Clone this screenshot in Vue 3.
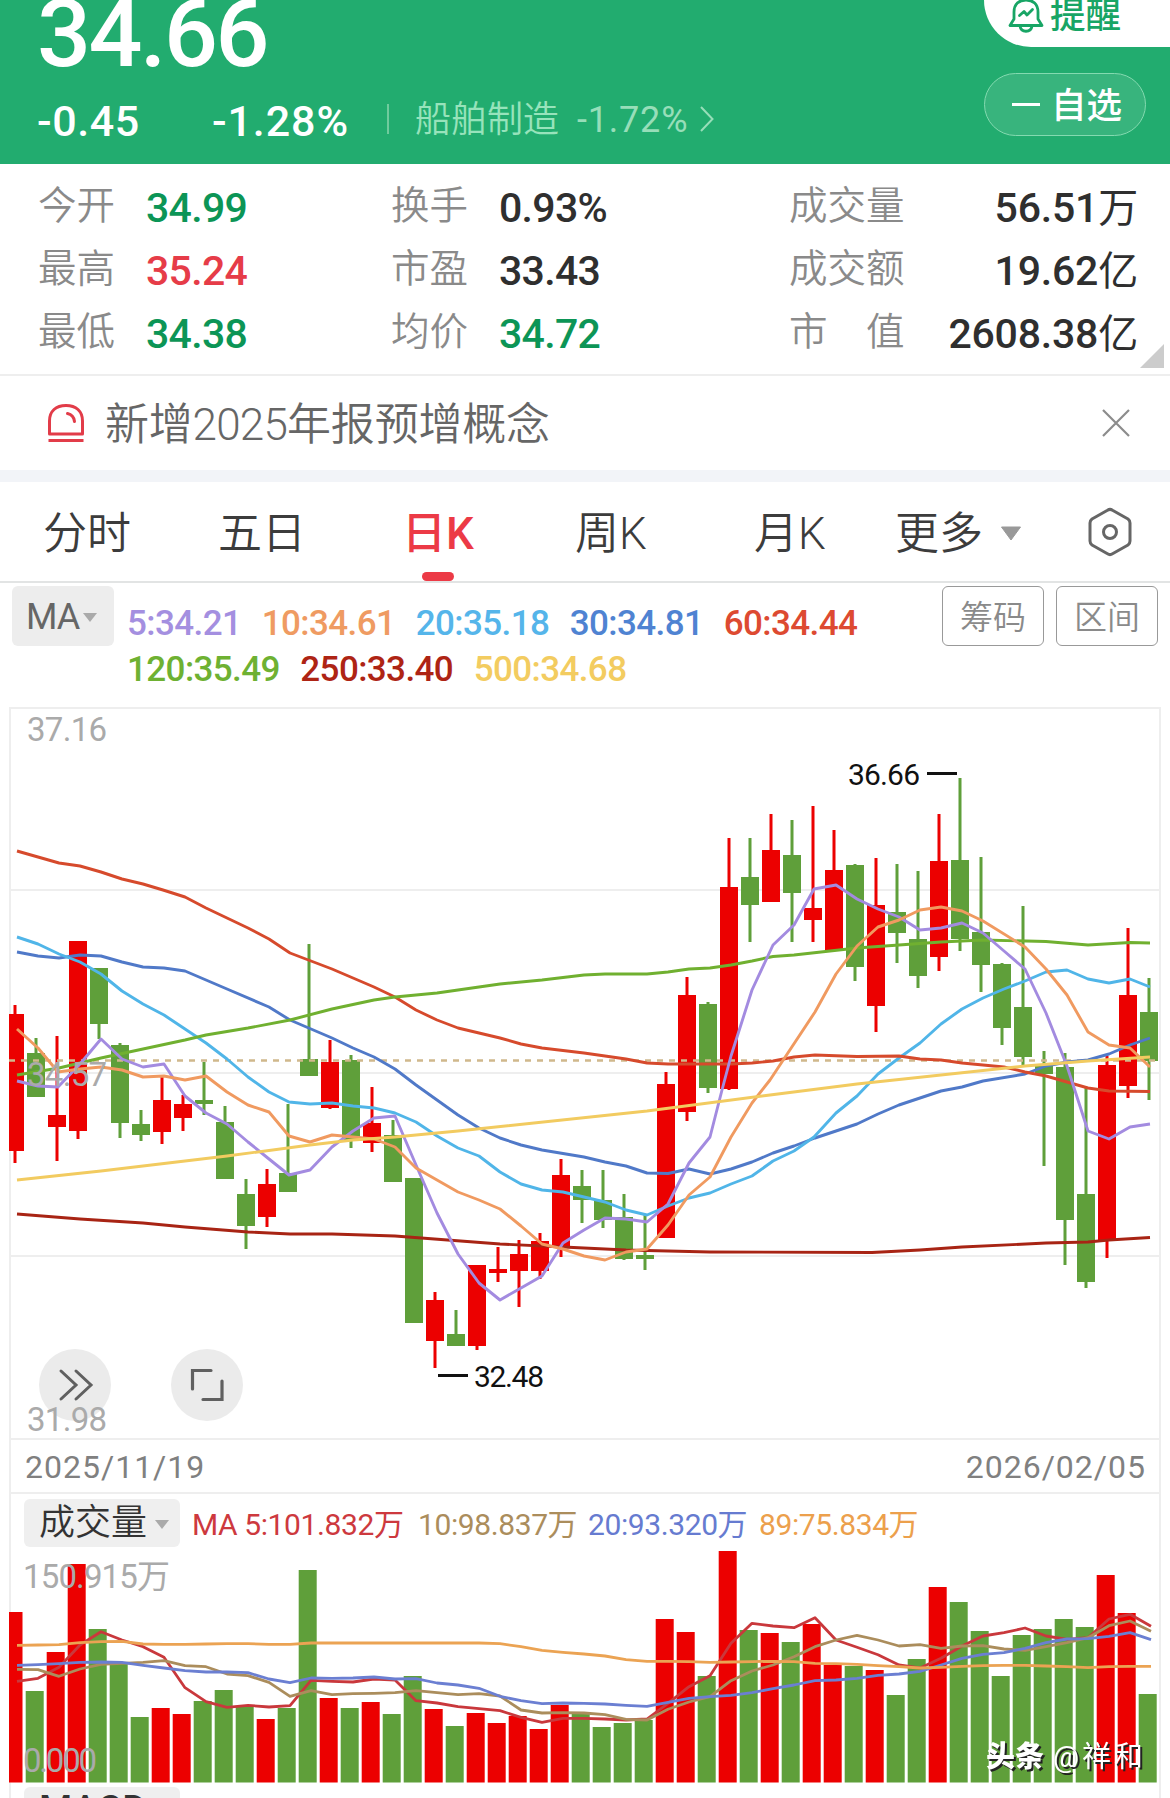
<script setup>
const stats = [
  ['今开', '34.99', 'down', '换手', '0.93%', '', '成交量', '56.51', '万'],
  ['最高', '35.24', 'up', '市盈', '33.43', '', '成交额', '19.62', '亿'],
  ['最低', '34.38', 'down', '均价', '34.72', 'down', '市　值', '2608.38', '亿'],
]
const tabs = [
  { name: '分时', cls: 't1' }, { name: '五日', cls: 't2' }, { name: '日K', cls: 't3 active' },
  { name: '周K', cls: 't4' }, { name: '月K', cls: 't5' }, { name: '更多', cls: 't6' },
]
const RED = '#ec0000'
const GREEN = '#5f9f3a'

// [rising, high, body top, body bottom, low, volume top]
const days = [
  [1, 1005, 1014, 1151, 1163, 1612], [0, 1038, 1053, 1097, 1097, 1691], [1, 1036, 1115, 1127, 1161, 1652],
  [1, 941, 941, 1131, 1139, 1564], [0, 968, 968, 1024, 1039, 1629], [0, 1043, 1045, 1123, 1138, 1663],
  [0, 1110, 1124, 1135, 1141, 1717], [1, 1077, 1100, 1132, 1144, 1708], [1, 1095, 1104, 1118, 1131, 1714],
  [0, 1062, 1100, 1104, 1115, 1701], [0, 1106, 1122, 1179, 1179, 1690], [0, 1179, 1194, 1226, 1249, 1707],
  [1, 1169, 1184, 1217, 1227, 1719], [0, 1104, 1173, 1192, 1192, 1708], [0, 944, 1059, 1076, 1076, 1570],
  [1, 1040, 1062, 1108, 1109, 1698], [0, 1055, 1060, 1141, 1148, 1708], [1, 1087, 1123, 1143, 1152, 1702],
  [0, 1120, 1135, 1182, 1182, 1714], [0, 1178, 1178, 1323, 1323, 1676], [1, 1292, 1300, 1341, 1368, 1709],
  [0, 1310, 1334, 1346, 1346, 1726], [1, 1265, 1265, 1346, 1350, 1713], [1, 1247, 1269, 1273, 1282, 1723],
  [1, 1240, 1254, 1271, 1307, 1716], [1, 1233, 1241, 1271, 1279, 1729], [1, 1159, 1175, 1248, 1257, 1705],
  [0, 1170, 1186, 1200, 1223, 1712], [0, 1170, 1200, 1220, 1228, 1727], [0, 1194, 1217, 1259, 1260, 1723],
  [0, 1215, 1255, 1259, 1270, 1720], [1, 1072, 1084, 1238, 1238, 1619], [1, 977, 995, 1112, 1121, 1632],
  [0, 1002, 1004, 1088, 1093, 1676], [1, 838, 887, 1089, 1090, 1551], [0, 838, 877, 905, 942, 1630],
  [1, 814, 850, 902, 902, 1633], [0, 820, 855, 893, 942, 1642], [1, 806, 908, 920, 942, 1624],
  [1, 830, 870, 950, 950, 1665], [0, 864, 865, 967, 981, 1666], [1, 858, 905, 1006, 1032, 1670],
  [0, 864, 912, 933, 963, 1695], [0, 871, 939, 976, 988, 1659], [1, 814, 861, 957, 971, 1587],
  [0, 778, 860, 939, 951, 1602], [0, 857, 932, 965, 992, 1631], [0, 963, 964, 1028, 1045, 1676],
  [0, 906, 1007, 1057, 1065, 1635], [0, 1051, 1066, 1074, 1166, 1629], [0, 1053, 1067, 1220, 1265, 1619],
  [0, 1088, 1194, 1282, 1288, 1627], [1, 1056, 1065, 1240, 1258, 1575], [1, 928, 995, 1086, 1098, 1613],
  [0, 978, 1012, 1061, 1100, 1694],
].map(([up, high, top, bottom, low, vol], i) => ({
  color: up ? RED : GREEN, high, top, bottom, low, vol,
  cx: 15 + 21 * i,
  x: i ? 6 + 21 * i : 9,
  w: i ? 18 : 15,
  vx: i ? 4.7 + 21 * i : 9,
  vw: i ? 18 : 13.5,
}))

const averages = [
  { color: '#a82414', pts: '17,1214 80,1219 143,1223 185,1227 248,1232 290,1234 332,1234 395,1236 500,1244 563,1247 626,1250 710,1252 872,1252.5 920,1250 962,1247 1046,1243 1088,1242 1109,1240 1150,1237.5' },
  { color: '#5079c8', pts: '17,952 38,956 59,958 80,955 101,956 122,962 143,967 164,968 185,971 206,980 227,989 269,1007 290,1020 311,1029 332,1038 353,1048 374,1057 395,1069 416,1085 437,1100 458,1115 479,1128 500,1138 521,1145 542,1150 584,1157 605,1162 626,1166 647,1173 668,1173.5 689,1169 710,1174 731,1169 752,1162 773,1153 794,1146 815,1138 836,1131 857,1124 878,1114 899,1105 941,1091 962,1087 983,1081 1025,1074 1046,1066 1067,1062 1088,1060 1109,1054 1130,1045 1150,1038' },
  { color: '#50b5e8', pts: '17,937 38,944 59,954 80,962 101,974 122,991 143,1004 164,1015 185,1029 206,1043 227,1059 248,1077 269,1092 289,1102 310,1104 332,1103 353,1106 374,1108 395,1113 416,1122 437,1136 458,1148 479,1156 500,1172 521,1184 542,1190 563,1192 584,1197 605,1202 626,1210 647,1215 668,1206 689,1198 710,1193 731,1184 752,1176 773,1161 794,1151 814,1137 836,1113 857,1096 878,1074 899,1058 920,1043 941,1024 962,1009 983,998 1004,989 1025,981 1046,972 1067,970 1088,979 1109,983 1130,979 1150,987' },
  { color: '#d64a2c', pts: '17,851 38,857 59,863 80,866 101,872 122,879 143,884 163,890 185,897 206,908 227,918 248,928 269,939 290,953 311,961 332,969 353,978 374,987 395,997 416,1010 437,1020 458,1028 479,1033 500,1038 521,1044 542,1048 584,1053 605,1056 626,1059 647,1063 668,1064 731,1064 752,1063 773,1061 794,1057 815,1055 857,1056.5 899,1056 920,1059 941,1060 962,1063 983,1065 1004,1067 1025,1072 1046,1076 1067,1082 1088,1088 1109,1091 1150,1091.5' },
  { color: '#70b030', pts: '17,1075 59,1068 101,1058 143,1049 185,1040 206,1035 248,1028 290,1020 332,1009 374,1000 395,997 437,993 458,990 500,984 542,980 584,975 605,974 647,974 668,972 689,969 710,968 731,965 752,961 773,956.5 794,955 857,948 899,945 941,942 983,940 1046,941.5 1088,945 1130,942.5 1150,943' },
  { color: '#a38be0', pts: '17,1081 38,1086 58,1087 80,1064 101,1039 122,1059 143,1067 164,1064 185,1096 206,1113 227,1124 248,1142 269,1159 289,1175 310,1170 332,1147 353,1131 374,1118 395,1116 416,1165 437,1213 458,1254 479,1283 500,1300 521,1288 542,1276 563,1243 584,1230 605,1218 626,1219 647,1222 668,1204 689,1163 710,1137 722,1090 731,1056 752,990 773,945 794,925 814,889 836,885 857,899 878,909 899,917 920,930 941,928 962,923 983,933 1004,951 1025,969 1046,1013 1067,1066 1088,1131 1109,1139 1130,1127 1150,1124' },
  { color: '#f09a60', pts: '17,1029 38,1048 58,1072 80,1069 101,1067 122,1070 143,1077 164,1076 185,1080 206,1076 227,1092 248,1105 269,1112 289,1136 310,1142 332,1135 353,1137 374,1139 395,1147 416,1168 458,1192 479,1200 500,1209 521,1226 542,1244 563,1249 584,1256 605,1260 626,1252 647,1249 668,1225 689,1195 710,1177 731,1137 752,1103 770,1080 815,1012 836,974 857,946 878,927 899,920 920,910 941,907 962,911 983,921 1025,947 1046,969 1067,995 1088,1032 1109,1045 1130,1048 1150,1067' },
  { color: '#f2cb60', pts: '17,1180 101,1171 227,1156 310,1145 353,1140 395,1137 458,1131 647,1111 770,1095 857,1084 1025,1066 1088,1061 1150,1057' },
]

const series = (ys) => ys.map((y, i) => `${17 + 21 * i},${(1470 + y / 3).toFixed(1)}`).join(' ')
const volumeLines = [
  { color: '#c9383c', pts: series([634, 625, 592, 525, 485, 510, 530, 562, 653, 695, 712, 706, 711, 707, 631, 634, 636, 627, 630, 692, 699, 710, 716, 722, 742, 757, 745, 745, 747, 750, 747, 700, 650, 617, 520, 460, 468, 473, 443, 510, 532, 554, 585, 594, 565, 528, 498, 488, 474, 498, 508, 503, 447, 433, 469]) },
  { color: '#ab8d5c', pts: series([598, 599, 619, 597, 583, 580, 577, 572, 587, 590, 612, 617, 637, 679, 662, 674, 671, 670, 668, 662, 668, 674, 671, 678, 720, 729, 728, 729, 734, 748, 750, 718, 696, 680, 632, 603, 585, 560, 530, 510, 496, 510, 528, 524, 535, 528, 527, 537, 541, 530, 518, 503, 467, 453, 484]) },
  { color: '#6b7fd2', pts: series([586, 584, 581, 577, 576, 577, 586, 594, 602, 606, 606, 608, 627, 638, 624, 625, 624, 621, 627, 626, 639, 645, 655, 679, 692, 701, 699, 700, 702, 706, 709, 697, 685, 680, 676, 668, 656, 645, 632, 630, 625, 616, 612, 604, 585, 565, 553, 548, 535, 518, 507, 506, 499, 488, 509]) },
  { color: '#eba353', pts: series([526, 525, 524, 518, 515, 514, 522, 523, 523, 522, 521, 521, 523, 523, 519, 519, 519, 519, 519, 519, 519, 519, 519, 521, 530, 541, 547, 552, 558, 569, 574, 574, 575, 577, 576, 575, 574, 575, 580, 581, 583, 587, 590, 594, 592, 589, 587, 586, 586, 588, 590, 593, 590, 589, 589]) },
]
const legend1 = [['5:34.21', '#a48fe0'], ['10:34.61', '#ef9b62'], ['20:35.18', '#55b5ea'], ['30:34.81', '#4f83d2'], ['60:34.44', '#dd4a31']]
const legend2 = [['120:35.49', '#6eb132'], ['250:33.40', '#ae2414'], ['500:34.68', '#f3cc60']]
const volLegend = [['MA 5:101.832', '#cd393e', 'v1'], ['10:98.837', '#ab8d5c', 'v2'], ['20:93.320', '#667bd0', 'v3'], ['89:75.834', '#eca04c', 'v4']]
</script>

<template>
  <main class="page">
    <header class="header">
      <div class="quote">
        <div class="price">34.66</div>
        <div class="change">
          <span class="diff">-0.45</span>
          <span class="pct">-1.28%</span>
          <i class="bar"></i>
          <span class="sector">船舶制造</span>
          <span class="sector-pct">-1.72%</span>
          <svg class="chev" width="18" height="30" viewBox="0 0 18 30"><path d="M3 3 14.500 15 3 27" fill="none" stroke="#97deb9" stroke-width="2" /></svg>
        </div>
      </div>
      <div class="actions">
        <div class="remind">
          <svg width="36" height="36" viewBox="0 0 36 36" fill="none" stroke="#18a565" stroke-width="2.800" stroke-linecap="round" stroke-linejoin="round">
            <path d="M2 28.500H34L30 22V15C30 7 25 3 18 3S6 7 6 15V22Z" />
            <path d="M12 29C13 36 23 36 24 29" />
            <path d="M11.500 18.500 16 14.500 19 18 24.500 12.500" />
          </svg>
          <span>提醒</span>
        </div>
        <div class="favor"><i></i><span>自选</span></div>
      </div>
    </header>

    <section class="stats">
      <div v-for="r in stats" :key="r[0]" class="stat-row">
        <span class="label">{{ r[0] }}</span><span class="num" :class="r[2]">{{ r[1] }}</span>
        <span class="label">{{ r[3] }}</span><span class="num" :class="r[5]">{{ r[4] }}</span>
        <span class="label">{{ r[6] }}</span><span class="num last">{{ r[7] }}<b>{{ r[8] }}</b></span>
      </div>
      <i class="corner"></i>
    </section>

    <section class="notice">
      <svg width="38" height="40" viewBox="0 0 38 40" fill="none" stroke="#e23c49" stroke-width="3">
        <path d="M2.500 31V18C2.500 8 9 2.500 19 2.500S35.500 8 35.500 18V31Z" stroke-linejoin="round" />
        <path d="M20.500 10.500C25 11.500 27 14 27.500 18.500" stroke-linecap="round" />
        <path d="M1.500 37.500H36.500" />
      </svg>
      <p>新增<span>2025</span>年报预增概念</p>
      <svg class="close" width="30" height="30" viewBox="0 0 30 30"><path d="M2 2 28 28M28 2 2 28" stroke="#8c8c8c" stroke-width="2.200" /></svg>
    </section>

    <nav class="tabs">
      <div v-for="t in tabs" :key="t.name" class="tab" :class="t.cls">{{ t.name }}</div>
      <svg class="more" width="22" height="15" viewBox="0 0 22 15"><path d="M1.500 1H20.500L11 14Z" fill="#999" stroke="#999" stroke-linejoin="round" /></svg>
      <svg class="hex" width="44" height="50" viewBox="0 0 44 50" fill="none" stroke="#666" stroke-width="3" stroke-linejoin="round">
        <path d="M19.500 3.200Q22 1.500 24.500 3.200L40 12Q42 13.500 42 16V34Q42 36.500 40 38L24.500 46.800Q22 48.500 19.500 46.800L4 38Q2 36.500 2 34V16Q2 13.500 4 12Z" />
        <circle cx="22" cy="25" r="6.500" />
      </svg>
    </nav>

    <section class="indicators">
      <div class="ma-btn">MA<svg width="14" height="9" viewBox="0 0 14 9"><path d="M0 0H14L7 9Z" fill="#aaa" /></svg></div>
      <div class="legend">
        <div class="line"><span v-for="l in legend1" :key="l[0]" :style="{ color: l[1] }">{{ l[0] }}</span></div>
        <div class="line"><span v-for="l in legend2" :key="l[0]" :style="{ color: l[1] }">{{ l[0] }}</span></div>
      </div>
      <div class="ghost">筹码</div>
      <div class="ghost">区间</div>
    </section>

    <div class="frame">
      <svg class="kline" width="1148" height="729" viewBox="11 709 1148 729">
        <path d="M11 890H1159M11 1073H1159M11 1256H1159" stroke="#eee" stroke-width="2" />
        <g v-for="d in days" :key="d.cx" :fill="d.color">
          <rect :x="d.cx - 1.500" :y="d.high" width="3" :height="d.low - d.high" />
          <rect :x="d.x" :y="d.top" :width="d.w" :height="d.bottom - d.top" />
        </g>
        <path d="M9 1060.500H1159" stroke="#d0b88c" stroke-width="2.700" stroke-dasharray="6 6" />
        <polyline v-for="a in averages" :key="a.color" :points="a.pts" fill="none" :stroke="a.color" stroke-width="2.900" stroke-linejoin="round" />
        <g class="axis">
          <text x="27" y="741" textLength="80">37.16</text>
          <text x="27" y="1086" textLength="80">34.57</text>
        </g>
        <g fill="#ebebeb"><circle cx="75" cy="1385" r="36" /><circle cx="207" cy="1385" r="36" /></g>
        <path d="M61 1371 76 1385 61 1399M76 1371 91 1385 76 1399" fill="none" stroke="#606060" stroke-width="3" stroke-linecap="round" />
        <path d="M192.500 1389V1370.500H211M222 1381V1399.500H203" fill="none" stroke="#606060" stroke-width="3.200" stroke-linecap="round" />
        <text class="axis" x="27" y="1431" textLength="80">31.98</text>
        <g class="mark">
          <text x="848" y="785" textLength="72">36.66</text>
          <text x="474" y="1387" textLength="70">32.48</text>
          <path d="M927 773.500H957M438 1375.500H468" stroke="#111" stroke-width="3" />
        </g>
      </svg>
      <div class="dates"><span>2025/11/19</span><span>2026/02/05</span></div>
      <div class="vol-head">
        <div class="vol-btn">成交量<svg width="14" height="9" viewBox="0 0 14 9"><path d="M0 0H14L7 9Z" fill="#aaa" /></svg></div>
        <div v-for="v in volLegend" :key="v[0]" class="vl" :class="v[2]" :style="{ color: v[1] }">{{ v[0] }}<b>万</b></div>
      </div>
      <svg class="volume" width="1148" height="238" viewBox="11 1549 1148 238">
        <rect v-for="d in days" :key="d.cx" :x="d.vx" :y="d.vol" :width="d.vw" :height="1782.500 - d.vol" :fill="d.color" />
        <polyline v-for="v in volumeLines" :key="v.color" :points="v.pts" fill="none" :stroke="v.color" stroke-width="2.800" stroke-linejoin="round" />
        <g class="axis">
          <text x="23" y="1587.500" textLength="147">150.915万</text>
          <text x="23" y="1771.500" textLength="74">0.000</text>
        </g>
        <g class="credit">
          <text x="986" y="1767" textLength="58" class="heavy">头条</text>
          <text x="1053" y="1767" textLength="90">@祥和</text>
        </g>
      </svg>
      <div class="macd">MACD</div>
    </div>
  </main>
</template>

<style>
body { background: #fff; overflow: hidden; }
</style>

<style scoped>
.page {
  width: 1170px;
  height: 1798px;
  overflow: hidden;
  background: #fff;
  font-family: Roboto, "Noto Sans CJK SC", sans-serif;
  color: #333;
}
.page * { box-sizing: border-box; }
svg { display: block; flex: none; }
b { font-weight: 400; }

.header { height: 164px; background: #22ac6f; display: flex; color: #fff; }
.quote { width: 984px; padding-left: 37px; }
.price { font-size: 95px; line-height: 67px; font-weight: 500; letter-spacing: -2.5px; }
.change { display: flex; align-items: center; height: 70px; margin-top: 19px; font-size: 43px; font-weight: 500; white-space: nowrap; }
.diff { width: 175px; letter-spacing: 0.6px; }
.pct { width: 175px; letter-spacing: 0.9px; }
.bar { width: 2px; height: 30px; background: #6fcb9d; margin-bottom: 5px; }
.sector { margin: 0 0 2px 26px; width: 162px; font-size: 36px; font-weight: 350; color: #97e3bb; line-height: 40px; }
.sector-pct { font-size: 36px; font-weight: 400; color: #97deb9; width: 121px; margin-bottom: 3px; letter-spacing: 0.8px; }
.chev { margin-bottom: 4px; }
.actions { width: 186px; }
.remind { height: 47px; background: #fff; border-radius: 0 0 0 47px; display: flex; padding-left: 24px; color: #18a565; font-size: 35.500px; font-weight: 500; line-height: 33px; }
.remind svg { margin-top: -3px; }
.remind span { margin-left: 6px; }
.favor { width: 162px; height: 63px; margin-top: 26px; border: 1.5px solid #84dab0; border-radius: 32px; background: #38b47d; display: flex; align-items: center; padding-left: 27px; font-size: 35.500px; font-weight: 500; line-height: 35px; }
.favor i { width: 28px; height: 3px; background: #fff; margin-right: 11px; }
.favor span { padding-top: 3px; }

.stats { position: relative; height: 212px; padding-top: 12px; border-bottom: 2px solid #eee; }
.stat-row { height: 63px; display: grid; align-items: center; grid-template-columns: 108px 245px 108px 290px 130px 219px; padding-left: 38px; }
.label { font-size: 38.500px; font-weight: 350; color: #8a8a8a; line-height: 40px; margin-bottom: 4px; }
.num { font-size: 41px; font-weight: 500; color: #2f2f2f; line-height: 50px; white-space: nowrap; letter-spacing: -0.7px; }
.num.last { text-align: right; letter-spacing: -0.2px; }
.num b { font-size: 40px; line-height: 40px; }
.num.down { color: #0c9556; }
.num.up { color: #e63c48; }
.corner { position: absolute; right: 6px; bottom: 6px; width: 24px; height: 24px; background: #ccc; clip-path: polygon(100% 0, 100% 100%, 0 100%); }

.notice { height: 94px; display: flex; align-items: center; padding-left: 47px; }
.notice p { margin: 4px 0 0 20px; font-size: 44px; font-weight: 350; line-height: 50px; color: #666; width: 996px; letter-spacing: -0.2px; }
.notice p span { letter-spacing: -0.8px; }

.tabs { position: relative; height: 113px; border-top: 12px solid #f2f4f8; border-bottom: 2px solid #e2e4e4; display: flex; align-items: center; font-size: 44px; font-weight: 350; color: #3c3c3c; }
.tab { line-height: 50px; height: 99px; padding-top: 27px; white-space: nowrap; }
.t1 { margin-left: 43px; width: 175px; }
.t2 { width: 184px; }
.t3 { width: 173px; }
.t4 { width: 179px; }
.t5 { width: 141px; }
.t6 { width: 105px; }
.active { color: #ec3a46; font-weight: 500; position: relative; }
.active::after { content: ""; position: absolute; left: 20px; bottom: 0; width: 32px; height: 9px; border-radius: 4.500px; background: #ec3a46; }
.hex { margin-left: 66px; }
.more { margin-top: 4px; }

.indicators { height: 124px; padding: 3px 0 0 12px; display: flex; }
.ma-btn { width: 102px; height: 60px; background: #ededed; border-radius: 6px; display: flex; align-items: center; padding: 2px 0 0 14px; font-size: 36px; color: #666; letter-spacing: -1px; }
.ma-btn svg { margin-left: 4px; }
.legend { width: 828px; padding: 15px 0 0 13px; }
.line { height: 46px; line-height: 46px; display: flex; gap: 20.5px; font-size: 35px; font-weight: 500; white-space: nowrap; letter-spacing: -0.6px; }
.ghost { width: 102px; height: 60px; border: 1.5px solid #999; border-radius: 6px; text-align: center; font-size: 33px; font-weight: 350; color: #8a8a8a; line-height: 62px; margin-right: 12px; flex: none; }

.frame { margin: 0 9px; border: 2px solid #eee; border-bottom: 0; width: 1152px; height: 1200px; }
.kline, .volume { overflow: visible; }
.axis { font-size: 33px; fill: #aaa; }
.mark { font-size: 30px; fill: #111; }
.dates { height: 56px; border: solid #eee; border-width: 2px 0; display: flex; justify-content: space-between; padding: 0 13px 0 14px; font-size: 32px; line-height: 55px; color: #808080; letter-spacing: 1px; }
.vol-head { height: 55px; display: flex; align-items: flex-start; }
.vol-btn { margin: 5px 0 0 13px; width: 156px; height: 48px; background: #efefef; border-radius: 6px; padding-left: 15px; display: flex; align-items: center; font-size: 36px; font-weight: 350; line-height: 40px; padding-bottom: 1px; }
.vol-btn svg { margin: 3px 0 0 8px; }
.vl { font-size: 30px; line-height: 62px; white-space: nowrap; letter-spacing: -0.4px; }
.v1 { margin-left: 12px; width: 226px; }
.v2 { width: 170px; }
.v3 { width: 171px; }
.credit { font-size: 29px; fill: #fff; filter: drop-shadow(2px 2px 0 #222); }
.heavy { font-weight: 900; }
.macd { margin-left: 13px; width: 156px; height: 50px; background: #efefef; border-radius: 6px; padding: 5px 0 0 15px; font-size: 38px; font-weight: 500; line-height: 36px; }
</style>
